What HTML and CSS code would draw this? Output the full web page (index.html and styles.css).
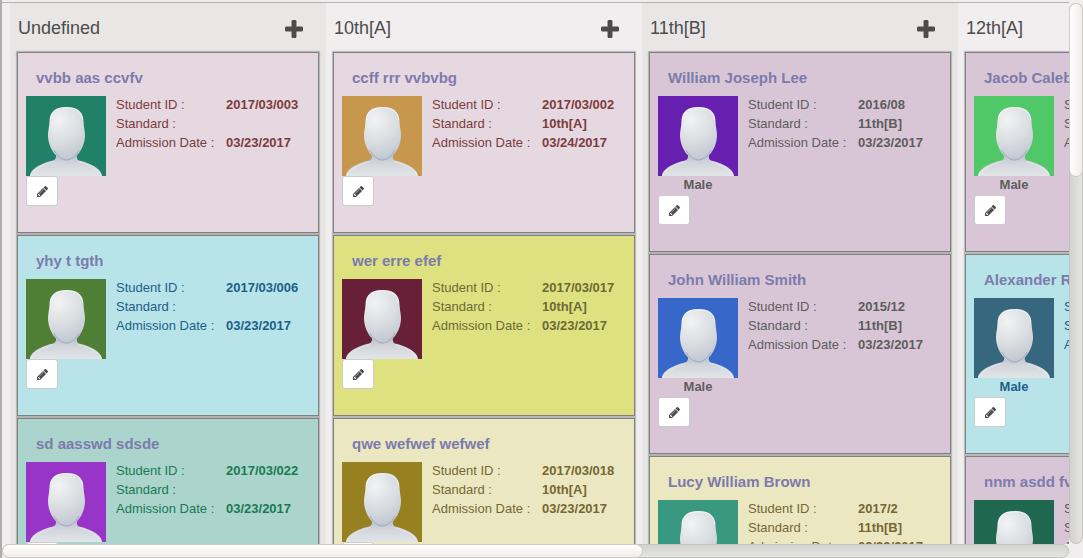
FILE: index.html
```
<!DOCTYPE html>
<html lang="en">
<head>
<meta charset="utf-8">
<title>Students</title>
<link rel="stylesheet" href="styles.css">
</head>
<body>
<svg class="sprite" aria-hidden="true">
  <defs>
    <radialGradient id="face" gradientUnits="userSpaceOnUse" cx="33" cy="24" r="44">
      <stop offset="0" stop-color="#f1f3f4"/>
      <stop offset=".5" stop-color="#dadde1"/>
      <stop offset="1" stop-color="#bcc3cf"/>
    </radialGradient>
    <linearGradient id="body" x1="0" y1="0" x2="0" y2="1">
      <stop offset="0" stop-color="#b4bdcb"/>
      <stop offset=".45" stop-color="#d2d6dc"/>
      <stop offset="1" stop-color="#e2e5e7"/>
    </linearGradient>
    <symbol id="avatar" viewBox="0 0 80 80">
      <path d="M4 80C4 73 16 67 27 64.500Q31 63.500 30 57L51 57Q50 63.500 53 64.500C64 67 76 73 76 80Z" fill="url(#body)"/>
      <path d="M5 80C6 74 18 68 28 65.500M52 65.500C63 68 74 74 75 80" fill="none" stroke="#f0f2f3" stroke-width="1" opacity=".5"/>
      <path d="M40.500 11C51 11 57 15 57.500 25C57.700 31 59 35 59 39C59 52 50 64.500 40.500 64.500S22 52 22 39C22 35 23.300 31 23.500 25C24 15 30 11 40.500 11Z" fill="url(#face)"/>
      <path d="M28 54C31 60 36 64 40.500 64S50 60 53 54" fill="none" stroke="#8f9bb0" stroke-width="1" opacity=".7"/>
      <path d="M24.200 24C25 15.500 31 11.700 40.500 11.700S56 15.500 56.800 24" fill="none" stroke="#ffffff" stroke-width="1" opacity=".6"/>
    </symbol>
    <symbol id="plus" viewBox="192 128 1408 1408">
      <path d="M1600 736v192q0 40-28 68t-68 28h-416v416q0 40-28 68t-68 28h-192q-40 0-68-28t-28-68v-416h-416q-40 0-68-28t-28-68v-192q0-40 28-68t68-28h416v-416q0-40 28-68t68-28h192q40 0 68 28t28 68v416h416q40 0 68 28t28 68z"/>
    </symbol>
    <symbol id="pencil" viewBox="128 149 1515 1515">
      <path d="M491 1536l91-91-235-235-91 91v107h128v128h107zm523-928q0-22-22-22-10 0-17 7l-542 542q-7 7-7 17 0 22 22 22 10 0 17-7l542-542q7-7 7-17zm-54-192l416 416-832 832h-416v-416zm683 96q0 53-37 90l-166 166-416-416 166-165q36-38 90-38 53 0 91 38l235 234q37 39 37 91z"/>
    </symbol>
  </defs>
</svg>
<div class="app">
  <main class="board" id="board"></main>
  <div class="bar bar-v"><div class="thumb thumb-v"></div></div>
  <div class="bar bar-h"><div class="thumb thumb-h"></div></div>
</div>
<script src="board.js"></script>
</body>
</html>
```

FILE: board.js
```
const columns = [
  { title: "Undefined", cards: [
    { name: "vvbb aas ccvfv", id: "2017/03/003", standard: "", date: "03/23/2017", theme: "rose", photo: "#218068" },
    { name: "yhy t tgth", id: "2017/03/006", standard: "", date: "03/23/2017", theme: "cyan", photo: "#4f7f35" },
    { name: "sd aasswd sdsde", id: "2017/03/022", standard: "", date: "03/23/2017", theme: "teal", photo: "#9835c8" }
  ]},
  { title: "10th[A]", cards: [
    { name: "ccff rrr vvbvbg", id: "2017/03/002", standard: "10th[A]", date: "03/24/2017", theme: "rose", photo: "#c7974e" },
    { name: "wer erre efef", id: "2017/03/017", standard: "10th[A]", date: "03/23/2017", theme: "lime", photo: "#672038" },
    { name: "qwe wefwef wefwef", id: "2017/03/018", standard: "10th[A]", date: "03/23/2017", theme: "sand", photo: "#97801f" }
  ]},
  { title: "11th[B]", cards: [
    { name: "William Joseph Lee", id: "2016/08", standard: "11th[B]", date: "03/23/2017", gender: "Male", theme: "mauve", photo: "#671fb0" },
    { name: "John William Smith", id: "2015/12", standard: "11th[B]", date: "03/23/2017", gender: "Male", theme: "mauve", photo: "#3767c8" },
    { name: "Lucy William Brown", id: "2017/2", standard: "11th[B]", date: "03/23/2017", theme: "sand", photo: "#389880" }
  ]},
  { title: "12th[A]", cards: [
    { name: "Jacob Caleb", id: "2016/05", standard: "12th[A]", date: "03/23/2017", gender: "Male", theme: "mauve", photo: "#50c868" },
    { name: "Alexander R", id: "2016/06", standard: "12th[A]", date: "03/23/2017", gender: "Male", theme: "cyan", photo: "#37677f" },
    { name: "nnm asdd fv", id: "2017/03/020", standard: "12th[A]", date: "03/23/2017", theme: "mauve", photo: "#20674f" }
  ]}
];

const card = c => `
  <article class="card ${c.theme}">
    <h3 class="name">${c.name}</h3>
    <div class="details">
      <div class="side">
        <svg class="photo" style="background:${c.photo}" role="img" aria-label="${c.name}"><use href="#avatar"/></svg>
        ${c.gender ? `<div class="gender">${c.gender}</div>` : ""}
        <button class="edit" type="button" aria-label="Edit ${c.name}"><svg class="pencil"><use href="#pencil"/></svg></button>
      </div>
      <dl class="facts">
        <dt>Student ID :</dt><dd>${c.id}</dd>
        <dt>Standard :</dt><dd>${c.standard}</dd>
        <dt>Admission Date :</dt><dd>${c.date}</dd>
      </dl>
    </div>
  </article>`;

document.getElementById("board").innerHTML = columns.map(col => `
  <section class="column">
    <header class="head">
      <h2 class="title">${col.title}</h2>
      <button class="add" type="button" aria-label="Add to ${col.title}"><svg class="plus"><use href="#plus"/></svg></button>
    </header>
    ${col.cards.map(card).join("")}
  </section>`).join("");
```

FILE: styles.css
```
* { box-sizing: border-box; }
body {
  margin: 0;
  background: #f0eeee;
  color: #4c4c4c;
  font: 13px/17px "Liberation Sans", Arial, sans-serif;
}
h2, h3, dl, dd { margin: 0; }
button { padding: 0; font: inherit; color: inherit; cursor: pointer; }
.sprite { position: absolute; width: 0; height: 0; }
.app {
  display: grid;
  grid-template: minmax(0, 1fr) 14px / minmax(0, 1fr) 14px;
  height: 100vh;
  padding-top: 2px;
  border-left: 2px solid #b0aeae;
}
.board {
  display: flex;
  overflow: hidden;
  padding-left: 8px;
  border-top: 1px solid #afafb6;
}
.column {
  flex: none;
  width: 316px;
  padding: 0 6px;
  background: #f0eeee;
}
.column:nth-child(odd) { background: #e8e7e5; }
.head {
  display: flex;
  justify-content: space-between;
  align-items: center;
  height: 49px;
  padding: 0 17px 0 2px;
}
.title { font-size: 18px; font-weight: 400; line-height: 24px; }
.add { display: flex; border: 0; background: none; padding-top: 3px; }
.plus { width: 18px; height: 18px; fill: #4c4c4c; }
.card {
  margin: 0 1px 2px;
  padding: 15px 8px 26px;
  border: 1px solid #808080;
  box-shadow: 0 0 1px 1px rgba(0, 0, 0, .2);
}
.name {
  padding-left: 10px;
  color: #7c7bad;
  font-size: 15px;
  line-height: 20px;
}
.details { display: flex; gap: 10px; padding-top: 8px; }
.side { width: 80px; }
.photo { display: block; width: 80px; height: 80px; }
.gender { height: 19px; text-align: center; font-weight: 700; }
.edit {
  display: flex;
  justify-content: center;
  align-items: center;
  width: 32px;
  height: 30px;
  border: 1px solid #ccc;
  border-radius: 3px;
  background: #fff;
}
.pencil { width: 11px; height: 11px; fill: #4c4c4c; }
.facts {
  display: grid;
  grid-template-columns: 110px auto;
  grid-auto-rows: 19px;
  align-content: start;
  white-space: nowrap;
}
.facts dd { font-weight: 700; }
.rose { background: #e5d8e1; color: #7d3c3c; }
.cyan { background: #b8e3e9; color: #1c5f88; }
.teal { background: #abd4cc; color: #1a7a53; }
.lime { background: #dde180; color: #6b6b36; }
.sand { background: #ebe7c1; color: #756832; }
.mauve { background: #d8c6d6; color: #5d5d5d; }
.bar { border: 1px solid #c4c2c0; border-radius: 7px; }
.bar-v { margin-top: 1px; background: linear-gradient(90deg, #d2d2d1, #e4e4e3); }
.bar-h { background: linear-gradient(#d2d2d1, #e4e4e3); }
.thumb { border-radius: 7px; box-shadow: 0 0 0 1px #cdcbc8; }
.thumb-v { height: 32%; background: linear-gradient(90deg, #fff, #efeeed); }
.thumb-h { width: 60%; height: 100%; background: linear-gradient(#fff, #efeeed); }
```
